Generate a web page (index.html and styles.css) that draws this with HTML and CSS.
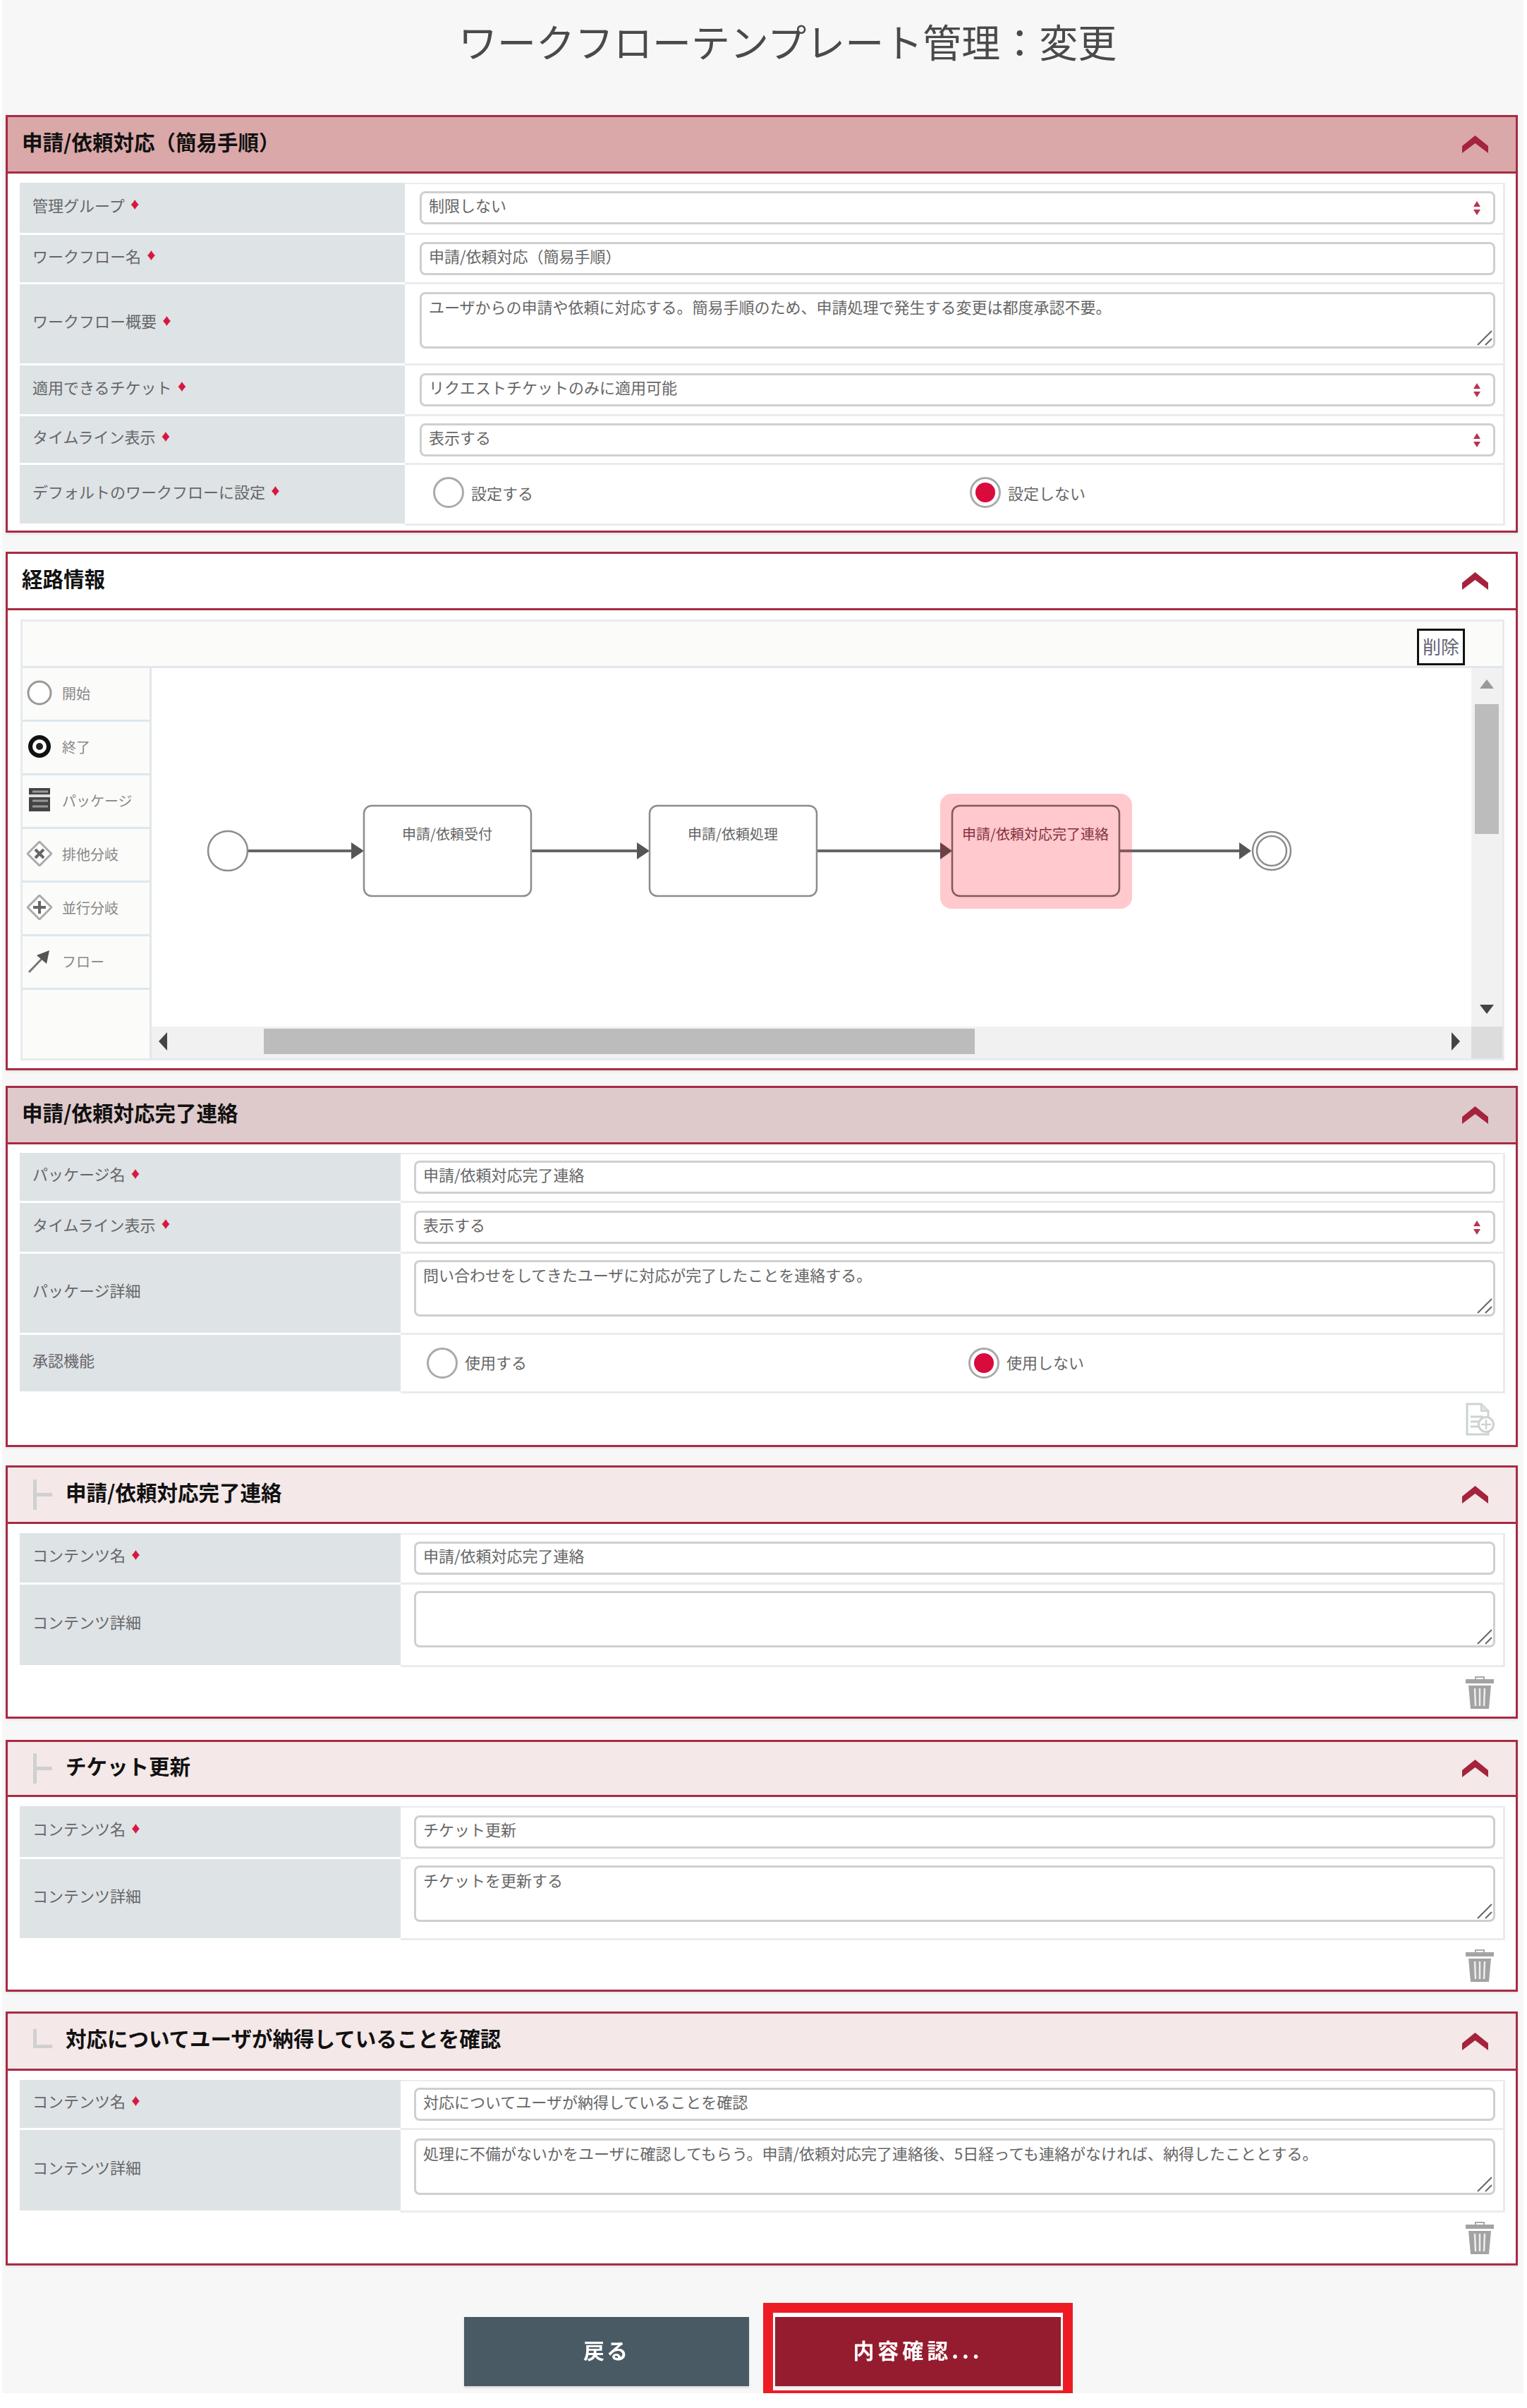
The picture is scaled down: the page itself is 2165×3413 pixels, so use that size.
FILE: index.html
```html
<!DOCTYPE html>
<html lang="ja">
<head>
<meta charset="utf-8">
<title>ワークフローテンプレート管理:変更</title>
<link rel="stylesheet" href="styles.css">
</head>
<body>
<svg class="defs" width="0" height="0" aria-hidden="true">
  <symbol id="chev" viewBox="0 0 37 25"><polygon points="0,15 18.5,0 37,15 37,25 18.5,11 0,25"/></symbol>
  <symbol id="grip" viewBox="0 0 22 22"><path d="M1 21 21 1M12 21 21 12" stroke="#666" stroke-width="2" fill="none"/></symbol>
  <symbol id="updown" viewBox="0 0 10 20"><polygon points="5,0 10,8 0,8"/><polygon points="5,20 10,12 0,12"/></symbol>
  <symbol id="trash" viewBox="0 0 40 47"><path d="M14 5V2h12v3" fill="none" stroke="#aaa" stroke-width="2"/><rect x="0" y="5" width="40" height="6" fill="#a3a3a3"/><path d="M4 14h32l-3 33H7z" fill="#a3a3a3"/><path d="M13 18l1 25M20 18v25M27 18l-1 25" stroke="#eee" stroke-width="2.5"/></symbol>
  <symbol id="addoc" viewBox="0 0 41 47"><path d="M2 2h20l10 10v33H2z" fill="#fff" stroke="#ccd3d3" stroke-width="3"/><path d="M22 2v10h10" fill="#dfe3e3" stroke="#ccd3d3" stroke-width="2"/><path d="M7 20h18M7 27h14M7 34h14" stroke="#ccd3d3" stroke-width="3"/><circle cx="29" cy="31" r="10.5" fill="#fff" stroke="#ccd3d3" stroke-width="3"/><path d="M29 24v14M22 31h14" stroke="#ccd3d3" stroke-width="2.5"/></symbol>
</svg>

<div class="page">
  <h1 class="title">ワークフローテンプレート管理：変更</h1>

  <section class="panel p1">
    <header class="hd hd-strong"><h2>申請/依頼対応（簡易手順）</h2><svg class="chev"><use href="#chev"/></svg></header>
    <div class="bd">
      <div class="tbl t1 wide">
        <div class="lb">管理グループ<i>♦</i></div>
        <div class="val"><div class="field select">制限しない<svg class="ud"><use href="#updown"/></svg></div></div>
        <div class="lb">ワークフロー名<i>♦</i></div>
        <div class="val"><div class="field">申請/依頼対応（簡易手順）</div></div>
        <div class="lb">ワークフロー概要<i>♦</i></div>
        <div class="val top"><div class="area">ユーザからの申請や依頼に対応する。簡易手順のため、申請処理で発生する変更は都度承認不要。<svg class="grip"><use href="#grip"/></svg></div></div>
        <div class="lb">適用できるチケット<i>♦</i></div>
        <div class="val"><div class="field select">リクエストチケットのみに適用可能<svg class="ud"><use href="#updown"/></svg></div></div>
        <div class="lb">タイムライン表示<i>♦</i></div>
        <div class="val"><div class="field select">表示する<svg class="ud"><use href="#updown"/></svg></div></div>
        <div class="lb">デフォルトのワークフローに設定<i>♦</i></div>
        <div class="val radios">
          <div class="opt"><span class="radio"></span>設定する</div>
          <div class="opt"><span class="radio on"></span>設定しない</div>
        </div>
      </div>
    </div>
  </section>

  <section class="panel p2">
    <header class="hd"><h2>経路情報</h2><svg class="chev"><use href="#chev"/></svg></header>
    <div class="bd">
      <div class="diagram">
        <div class="toolbar"><span class="del">削除</span></div>
        <div class="editor">
          <ul class="palette">
            <li><svg class="pi" viewBox="0 0 36 36"><circle cx="18" cy="18" r="16" fill="#fff" stroke="#999" stroke-width="3"/></svg>開始</li>
            <li><svg class="pi" viewBox="0 0 36 36"><circle cx="18" cy="18" r="13" fill="#fff" stroke="#111" stroke-width="6"/><circle cx="18" cy="18" r="5" fill="#222"/></svg>終了</li>
            <li><svg class="pi" viewBox="0 0 36 36"><rect x="3" y="1" width="30" height="33" fill="#444"/><path d="M3 11h30M3 13h30" stroke="#ddd" stroke-width="2"/><path d="M8 6h22M8 19h22M8 27h22" stroke="#999" stroke-width="3"/></svg>パッケージ</li>
            <li><svg class="pi" viewBox="0 0 36 36"><path d="M18 1 35 18 18 35 1 18z" fill="#fff" stroke="#aaa" stroke-width="3"/><path d="M12 12 24 24M24 12 12 24" stroke="#666" stroke-width="4"/></svg>排他分岐</li>
            <li><svg class="pi" viewBox="0 0 36 36"><path d="M18 1 35 18 18 35 1 18z" fill="#fff" stroke="#aaa" stroke-width="3"/><path d="M18 9V27M9 18H27" stroke="#666" stroke-width="4"/></svg>並行分岐</li>
            <li><svg class="pi" viewBox="0 0 36 36"><path d="M3 34 24 12" stroke="#777" stroke-width="3"/><path d="M32 3 28 22 14 10z" fill="#555"/></svg>フロー</li>
          </ul>
          <svg class="canvas" viewBox="2 0 1871 508">
            <g class="edges">
              <path d="M138 259H286M540 259H690M945 259H1120M1374 259H1544"/>
            </g>
            <g class="heads">
              <polygon points="285,247 303,259 285,271"/>
              <polygon points="690,247 708,259 690,271"/>
              <polygon points="1120,247 1137,259 1120,271"/>
              <polygon points="1544,247 1561,259 1544,271"/>
            </g>
            <circle class="node" cx="110" cy="259" r="28"/>
            <rect class="node" x="303" y="195" width="237" height="128" rx="11"/>
            <text class="nt" x="421" y="243">申請/依頼受付</text>
            <rect class="node" x="708" y="195" width="237" height="128" rx="11"/>
            <text class="nt" x="826" y="243">申請/依頼処理</text>
            <rect class="halo" x="1120" y="178" width="272" height="163" rx="16"/>
            <rect class="node sel" x="1137" y="195" width="237" height="128" rx="11"/>
            <path class="over" d="M1374 259H1392"/>
            <polygon class="head-over" points="1120,247 1137,259 1120,271"/>
            <text class="nt nt-sel" x="1255" y="243">申請/依頼対応完了連絡</text>
            <circle class="node thin" cx="1590" cy="259" r="27"/>
            <circle class="node thin" cx="1590" cy="259" r="21"/>
          </svg>
          <div class="vbar">
            <span class="arr up"></span>
            <span class="vthumb"></span>
            <span class="arr down"></span>
          </div>
          <div class="hbar">
            <span class="arr left"></span>
            <span class="hthumb"></span>
            <span class="arr right"></span>
          </div>
          <div class="corner"></div>
        </div>
      </div>
    </div>
  </section>

  <section class="panel p3">
    <header class="hd hd-mid"><h2>申請/依頼対応完了連絡</h2><svg class="chev"><use href="#chev"/></svg></header>
    <div class="bd">
      <div class="tbl t3">
        <div class="lb">パッケージ名<i>♦</i></div>
        <div class="val"><div class="field">申請/依頼対応完了連絡</div></div>
        <div class="lb">タイムライン表示<i>♦</i></div>
        <div class="val"><div class="field select">表示する<svg class="ud"><use href="#updown"/></svg></div></div>
        <div class="lb">パッケージ詳細</div>
        <div class="val top"><div class="area">問い合わせをしてきたユーザに対応が完了したことを連絡する。<svg class="grip"><use href="#grip"/></svg></div></div>
        <div class="lb">承認機能</div>
        <div class="val radios">
          <div class="opt"><span class="radio"></span>使用する</div>
          <div class="opt"><span class="radio on"></span>使用しない</div>
        </div>
      </div>
      <div class="foot"><svg class="addoc"><use href="#addoc"/></svg></div>
    </div>
  </section>

  <section class="panel p4">
    <header class="hd hd-soft"><span class="tree"></span><h2>申請/依頼対応完了連絡</h2><svg class="chev"><use href="#chev"/></svg></header>
    <div class="bd">
      <div class="tbl t4">
        <div class="lb">コンテンツ名<i>♦</i></div>
        <div class="val"><div class="field">申請/依頼対応完了連絡</div></div>
        <div class="lb">コンテンツ詳細</div>
        <div class="val top"><div class="area"><svg class="grip"><use href="#grip"/></svg></div></div>
      </div>
      <div class="foot"><svg class="trash"><use href="#trash"/></svg></div>
    </div>
  </section>

  <section class="panel p5">
    <header class="hd hd-soft"><span class="tree"></span><h2>チケット更新</h2><svg class="chev"><use href="#chev"/></svg></header>
    <div class="bd">
      <div class="tbl t5">
        <div class="lb">コンテンツ名<i>♦</i></div>
        <div class="val"><div class="field">チケット更新</div></div>
        <div class="lb">コンテンツ詳細</div>
        <div class="val top"><div class="area">チケットを更新する<svg class="grip"><use href="#grip"/></svg></div></div>
      </div>
      <div class="foot"><svg class="trash"><use href="#trash"/></svg></div>
    </div>
  </section>

  <section class="panel p6">
    <header class="hd hd-soft"><span class="tree last"></span><h2>対応についてユーザが納得していることを確認</h2><svg class="chev"><use href="#chev"/></svg></header>
    <div class="bd">
      <div class="tbl t6">
        <div class="lb">コンテンツ名<i>♦</i></div>
        <div class="val"><div class="field">対応についてユーザが納得していることを確認</div></div>
        <div class="lb">コンテンツ詳細</div>
        <div class="val top"><div class="area">処理に不備がないかをユーザに確認してもらう。申請/依頼対応完了連絡後、5日経っても連絡がなければ、納得したこととする。<svg class="grip"><use href="#grip"/></svg></div></div>
      </div>
      <div class="foot"><svg class="trash"><use href="#trash"/></svg></div>
    </div>
  </section>

  <div class="actions">
    <button class="btn back" type="button">戻る</button>
    <div class="mark"><button class="btn go" type="button">内容確認...</button></div>
  </div>
</div>
</body>
</html>
```

FILE: styles.css
```css
* { box-sizing: border-box; }
html, body { margin: 0; padding: 0; background: #fff; }
body { font-family: "Noto Sans CJK JP", "Noto Sans", sans-serif; color: #555; font-size: 22px; }
.defs { position: absolute; }

.page {
  margin-left: 3px;
  width: 2157px;
  height: 3392px;
  background: #f7f7f7;
  padding-left: 5px;
  filter: blur(0.7px);
}
.title {
  margin: 0;
  height: 163px;
  padding: 19px 0 0 642px;
  font-size: 55px;
  line-height: 76px;
  font-weight: 400;
  color: #4a4a4a;
  white-space: nowrap;
}

/* panels */
.panel {
  width: 2144px;
  border: 3px solid #a82b43;
  background: #fff;
  box-shadow: 0 2px 3px rgba(0, 0, 0, .08);
}
.p1 { height: 592px; }
.p2 { height: 735px; margin-top: 27px; }
.p3 { height: 512px; margin-top: 22px; }
.p4 { height: 359px; margin-top: 26px; }
.p5 { height: 357px; margin-top: 30px; }
.p6 { height: 360px; margin-top: 28px; }

.hd {
  height: 80px;
  border-bottom: 3px solid #a82b43;
  display: flex;
  align-items: center;
  padding: 0 39px 0 20px;
}
.p5 .hd { height: 78px; }
.p6 .hd { height: 81px; }
.hd h2 {
  margin: -10px 0 0;
  font-size: 29.5px;
  line-height: 40px;
  font-weight: 700;
  color: #111;
  white-space: nowrap;
}
.hd-strong { background: #daa8a8; }
.hd-mid { background: #dfcacb; }
.hd-soft { background: #f4e8e8; }
.chev { width: 37px; height: 25px; margin-left: auto; fill: #a5233c; }

.tree {
  position: relative;
  width: 27px;
  height: 43px;
  margin: 0 19px 0 16px;
  border-left: 5px solid #d0d0d0;
}
.tree::after {
  content: "";
  position: absolute;
  left: 0;
  right: 0;
  top: 19px;
  height: 5px;
  background: #d0d0d0;
}
.tree.last { height: 27px; margin-top: -8px; }
.tree.last::after { top: auto; bottom: 0; }

.bd { padding: 13px 15px 0 17px; }
.p3 .bd { padding-top: 12px; }

/* form tables */
.tbl {
  display: grid;
  grid-template-columns: 540px 1fr;
}
.tbl.wide { grid-template-columns: 546px 1fr; }
.t1 { grid-template-rows: 74px 70px 115px 72px 69px 86px; }
.t3 { grid-template-rows: 71px 72px 115px 83px; }
.t4 { grid-template-rows: 73px 117px; }
.t5 { grid-template-rows: 75px 115px; }
.t6 { grid-template-rows: 71px 117px; }

.lb {
  background: #dee3e6;
  margin-bottom: 3px;
  padding: 0 0 10px 18px;
  display: flex;
  align-items: center;
  color: #666;
  white-space: nowrap;
}
.lb i { color: #d8173f; font-style: normal; font-size: 15px; margin: 0 0 0 7px; }

.val {
  border-right: 3px solid #e8ecef;
  border-bottom: 3px solid #e8ecef;
  display: flex;
  align-items: center;
  padding: 0 11px 0 19px;
}
.tbl.wide .val { padding-left: 21px; }
.tbl > .val:nth-child(2) { box-shadow: inset 0 2px #e8ecef; }
.val.top { align-items: flex-start; padding-top: 9px; }
.tbl.wide .val.top { padding-top: 11px; }
.t6 .val.top { padding-top: 12px; }

.field, .area {
  position: relative;
  width: 100%;
  background: #fff;
  border: 3px solid #cfcfcf;
  border-radius: 8px;
  padding: 0 10px;
  color: #666;
  white-space: nowrap;
}
.field { height: 47px; line-height: 33px; }
.area { height: 80px; line-height: 32px; padding-top: 1px; }
.ud { position: absolute; right: 18px; top: 11px; width: 10px; height: 20px; fill: #b8344e; }
.grip { position: absolute; right: 1px; bottom: 1px; width: 22px; height: 22px; }

.radios { display: grid; grid-template-columns: 761px 1fr; padding: 0 0 0 40px; }
.t3 .radios { grid-template-columns: 768px 1fr; padding-left: 37px; }
.tbl.wide .radios { padding-left: 40px; }
.opt { display: flex; align-items: center; gap: 10px; color: #666; line-height: 26px; padding-bottom: 6px; }
.t3 .opt { padding-bottom: 4px; }
.radio {
  width: 44px;
  height: 44px;
  border: 3px solid #aaa;
  border-radius: 50%;
  background: #fff;
  display: flex;
  align-items: center;
  justify-content: center;
}
.t3 .radio { margin-bottom: -4px; }
.radio.on::after {
  content: "";
  width: 28px;
  height: 28px;
  border-radius: 50%;
  background: #d90a3c;
}

.foot { display: flex; justify-content: flex-end; padding: 12px 16px 0 0; }
.p3 .foot { padding-top: 13px; padding-right: 15px; }
.addoc { width: 41px; height: 47px; }
.trash { width: 40px; height: 47px; }

/* diagram */
.diagram {
  margin-left: 1px;
  width: 2104px;
  height: 625px;
  border: 3px solid #e6ebed;
  background: #fff;
}
.toolbar {
  height: 66px;
  background: #fbfbf9;
  border-bottom: 3px solid #e1e7ea;
  display: flex;
  justify-content: flex-end;
  padding: 10px 53px 0 0;
}
.del {
  width: 68px;
  height: 52px;
  border: 3px solid #111;
  background: #fff;
  font-size: 26px;
  line-height: 44px;
  text-align: center;
  color: #667;
}
.editor {
  display: grid;
  grid-template-columns: 183px 1871px 44px;
  grid-template-rows: 508px 45px;
}
.palette {
  grid-row: 1 / 3;
  margin: 0;
  padding: 0;
  list-style: none;
  background: #fbfbf9;
  border-right: 3px solid #e1e7ea;
}
.palette li {
  height: 76px;
  padding: 0 0 3px 6px;
  border-bottom: 3px solid #dde7ed;
  display: flex;
  align-items: center;
  gap: 14px;
  font-size: 20px;
  color: #888;
  white-space: nowrap;
}
.pi { width: 36px; height: 36px; flex: none; }

.canvas { display: block; width: 1871px; height: 508px; background: #fff; }
.edges path { stroke: #666; stroke-width: 4; fill: none; }
.heads polygon, .head-over { fill: #555; }
.head-over { fill: #6d4048; }
.node { fill: #fff; stroke: #8c8c8c; stroke-width: 2.5; }
.node.thin { stroke-width: 2.5; }
.node.sel { fill: #ffc9cd; stroke: #80595e; stroke-width: 2.5; }
.halo { fill: #ffc9cd; }
.over { stroke: #8a5a60; stroke-width: 4; }
.nt { font-size: 20px; text-anchor: middle; fill: #666; }
.nt-sel { fill: #85303f; }

.vbar {
  background: #f1f1f1;
  display: flex;
  flex-direction: column;
  align-items: center;
  padding-top: 16px;
}
.vthumb { width: 34px; height: 184px; margin-top: 22px; background: #bcbcbc; }
.vbar .down { margin-top: 242px; }
.hbar {
  background: #f1f1f1;
  display: flex;
  align-items: center;
  padding-left: 10px;
  padding-bottom: 4px;
}
.hthumb { width: 1008px; height: 36px; margin-left: 137px; background: #bcbcbc; }
.hbar .right { margin-left: 676px; }
.corner { background: #dcdcdc; }

.arr { width: 0; height: 0; border-style: solid; flex: none; }
.arr.up { border-width: 0 10px 13px; border-color: transparent transparent #999; }
.arr.down { border-width: 13px 10px 0; border-color: #444 transparent transparent; }
.arr.left { border-width: 13px 12px 13px 0; border-color: transparent #444 transparent transparent; }
.arr.right { border-width: 13px 0 13px 12px; border-color: transparent transparent transparent #444; }

/* actions */
.actions {
  display: flex;
  align-items: center;
  gap: 20px;
  margin-top: 53px;
  padding-left: 650px;
}
.btn {
  border: 0;
  height: 98px;
  padding: 0 0 7px;
  color: #fff;
  font-family: inherit;
  font-size: 30px;
  font-weight: 700;
  box-shadow: 0 2px 3px rgba(0, 0, 0, .15);
}
.back { width: 404px; background: #4a5a64; letter-spacing: 3px; }
.mark {
  border: 14px solid #ed1c24;
  background: #fff;
  padding: 6px 3px;
}
.go { display: block; width: 405px; background: #951c2e; letter-spacing: 5px; }
```
